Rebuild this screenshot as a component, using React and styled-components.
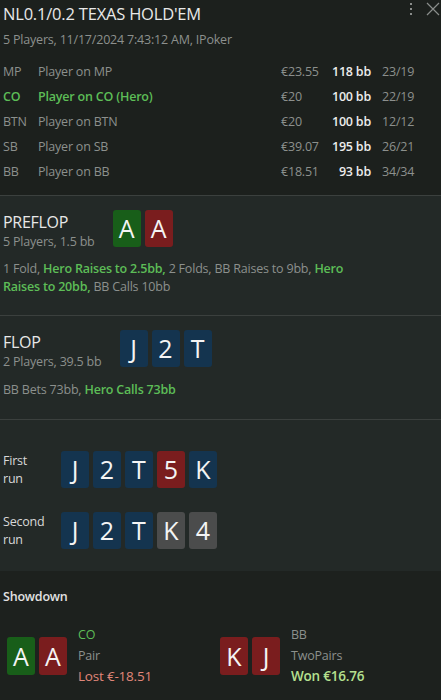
import React from 'react';
import styled, { createGlobalStyle } from 'styled-components';

const GlobalStyle = createGlobalStyle`
  html, body {
    margin: 0;
    padding: 0;
    background: #1c201d;
  }
  body {
    font-family: "Open Sans", "Noto Sans", sans-serif;
    color: #e6e6e6;
  }
`;

const Panel = styled.div`
  width: 441px;
  height: 700px;
  overflow: hidden;
  background: #1c201d;
  display: flex;
  flex-direction: column;
`;

const Header = styled.div`
  position: relative;
  padding: 3px 11px 11px 3px;
  border-bottom: 1px solid #3b403e;
`;

const Title = styled.div`
  font-size: 16.5px;
  line-height: 22px;
  color: #e8e8e8;
  letter-spacing: -0.2px;
`;

const Subtitle = styled.div`
  font-size: 12.5px;
  line-height: 20px;
  color: #8c908d;
  margin-top: 5px;
  margin-bottom: 9px;
  letter-spacing: -0.2px;
`;

const TopIcons = styled.div`
  position: absolute;
  top: 2px;
  right: 1px;
  display: flex;
  align-items: center;
  gap: 13px;
  color: #8a8d8b;
`;

const PlayerRow = styled.div`
  display: grid;
  grid-template-columns: 35px 1fr 50px 40px 59px;
  height: 25px;
  align-items: center;
  font-size: 12.5px;
  letter-spacing: -0.2px;
  color: ${p => (p.hero ? '#5dbd57' : '#8c908d')};
  font-weight: ${p => (p.hero ? 600 : 400)};
`;

const Muted = styled.span`
  font-weight: 400;
  color: #8c908d;
  padding-left: ${p => p.indent || 0};
`;

const Bb = styled.span`
  text-align: right;
  font-weight: 600;
  color: #ececec;
`;

const Street = styled.div`
  background: #232927;
  border-bottom: ${p => (p.last ? 'none' : '1px solid #3b403e')};
  padding: ${p => p.pad};
`;

const StreetHead = styled.div`
  display: flex;
  align-items: flex-end;
  gap: 18px;
`;

const StreetTitles = styled.div`
  margin-bottom: -5px;
`;

const StreetName = styled.div`
  font-size: 16px;
  line-height: 20px;
  color: #e8e8e8;
  letter-spacing: -0.3px;
`;

const StreetInfo = styled.div`
  font-size: 12.5px;
  line-height: 20px;
  color: #8c908d;
  letter-spacing: -0.2px;
`;

const Cards = styled.div`
  display: flex;
  gap: 4px;
`;

const CARD_COLORS = {
  green: '#185e19',
  red: '#7a1d1e',
  blue: '#14344f',
  gray: '#4b4c4c',
};

const Card = styled.div`
  width: 28px;
  height: ${p => (p.tall ? '38px' : '37px')};
  border-radius: 3px;
  background: ${p => CARD_COLORS[p.color]};
  color: #f4f4f4;
  font-size: 25px;
  line-height: ${p => (p.tall ? '38px' : '37px')};
  text-align: center;
`;

const Actions = styled.div`
  font-size: 12.5px;
  line-height: 18px;
  color: #8c908d;
  letter-spacing: -0.2px;
  margin-top: ${p => p.top};
  padding-right: 90px;
`;

const Hero = styled.span`
  color: #5dbd57;
  font-weight: 600;
`;

const RunRow = styled.div`
  display: flex;
  align-items: center;
  & + & {
    margin-top: 23px;
  }
`;

const RunLabel = styled.div`
  width: 58px;
  padding-top: 2px;
  font-size: 12.5px;
  line-height: 18px;
  color: #d8d8d8;
  letter-spacing: -0.2px;
`;

const Showdown = styled.div`
  flex: 1;
  background: #1d211e;
  padding: 16px 0 0 3px;
`;

const ShowdownTitle = styled.div`
  font-size: 12.5px;
  line-height: 20px;
  color: #e2e2e2;
  font-weight: 600;
  letter-spacing: -0.2px;
`;

const Hands = styled.div`
  display: grid;
  grid-template-columns: 213px 213px;
  padding-left: 4px;
  margin-top: 17px;
`;

const Hand = styled.div`
  display: flex;
  align-items: center;
  gap: 11px;
`;

const HandInfo = styled.div`
  display: flex;
  flex-direction: column;
  font-size: 12.5px;
  line-height: 21px;
  letter-spacing: -0.2px;
`;

const HandLine = styled.span`
  color: ${p => p.color || '#8c908d'};
  font-size: ${p => (p.big ? '13.5px' : '12.5px')};
  font-weight: ${p => (p.bold ? 600 : 400)};
`;

const players = [
  { pos: 'MP', name: 'Player on MP', money: '€23.55', bb: '118 bb', stat: '23/19' },
  { pos: 'CO', name: 'Player on CO (Hero)', money: '€20', bb: '100 bb', stat: '22/19', hero: true },
  { pos: 'BTN', name: 'Player on BTN', money: '€20', bb: '100 bb', stat: '12/12' },
  { pos: 'SB', name: 'Player on SB', money: '€39.07', bb: '195 bb', stat: '26/21' },
  { pos: 'BB', name: 'Player on BB', money: '€18.51', bb: '93 bb', stat: '34/34' },
];

const runs = [
  { label: ['First', 'run'], cards: [['J', 'blue'], ['2', 'blue'], ['T', 'blue'], ['5', 'red'], ['K', 'blue']] },
  { label: ['Second', 'run'], cards: [['J', 'blue'], ['2', 'blue'], ['T', 'blue'], ['K', 'gray'], ['4', 'gray']] },
];

const hands = [
  { cards: [['A', 'green'], ['A', 'red']], pos: 'CO', hero: true, made: 'Pair', result: 'Lost €-18.51', won: false },
  { cards: [['K', 'red'], ['J', 'red']], pos: 'BB', made: 'TwoPairs', result: 'Won €16.76', won: true },
];

const DotsIcon = () => (
  <svg width="4" height="14" viewBox="0 0 4 14">
    <rect x="1" y="1" width="2" height="2" fill="currentColor" />
    <rect x="1" y="6" width="2" height="2" fill="currentColor" />
    <rect x="1" y="11" width="2" height="2" fill="currentColor" />
  </svg>
);

const CloseIcon = () => (
  <svg width="14" height="14" viewBox="0 0 14 14">
    <path d="M1 1L13 13M13 1L1 13" stroke="currentColor" strokeWidth="1.2" />
  </svg>
);

export default function App() {
  return (
    <Panel>
      <GlobalStyle />
      <Header>
        <TopIcons>
          <DotsIcon />
          <CloseIcon />
        </TopIcons>
        <Title>NL0.1/0.2 TEXAS HOLD'EM</Title>
        <Subtitle>5 Players, 11/17/2024 7:43:12 AM, IPoker</Subtitle>
        {players.map(p => (
          <PlayerRow key={p.pos} hero={p.hero}>
            <span>{p.pos}</span>
            <span>{p.name}</span>
            <Muted>{p.money}</Muted>
            <Bb>{p.bb}</Bb>
            <Muted indent="11px">{p.stat}</Muted>
          </PlayerRow>
        ))}
      </Header>

      <Street pad="14px 3px 19px">
        <StreetHead>
          <StreetTitles>
            <StreetName>PREFLOP</StreetName>
            <StreetInfo>5 Players, 1.5 bb</StreetInfo>
          </StreetTitles>
          <Cards>
            <Card color="green">A</Card>
            <Card color="red">A</Card>
          </Cards>
        </StreetHead>
        <Actions top="13px">
          1 Fold, <Hero>Hero Raises to 2.5bb,</Hero> 2 Folds, BB Raises to 9bb,{' '}
          <Hero>Hero Raises to 20bb,</Hero> BB Calls 10bb
        </Actions>
      </Street>

      <Street pad="14px 3px 20px">
        <StreetHead>
          <StreetTitles>
            <StreetName>FLOP</StreetName>
            <StreetInfo>2 Players, 39.5 bb</StreetInfo>
          </StreetTitles>
          <Cards>
            <Card color="blue">J</Card>
            <Card color="blue">2</Card>
            <Card color="blue">T</Card>
          </Cards>
        </StreetHead>
        <Actions top="14px">
          BB Bets 73bb, <Hero>Hero Calls 73bb</Hero>
        </Actions>
      </Street>

      <Street pad="30px 3px 22px" last>
        {runs.map(r => (
          <RunRow key={r.label[0]}>
            <RunLabel>
              {r.label[0]}
              <br />
              {r.label[1]}
            </RunLabel>
            <Cards>
              {r.cards.map(([v, c], i) => (
                <Card key={i} color={c}>{v}</Card>
              ))}
            </Cards>
          </RunRow>
        ))}
      </Street>

      <Showdown>
        <ShowdownTitle>Showdown</ShowdownTitle>
        <Hands>
          {hands.map(h => (
            <Hand key={h.pos}>
              <Cards>
                {h.cards.map(([v, c], i) => (
                  <Card key={i} color={c} tall>{v}</Card>
                ))}
              </Cards>
              <HandInfo>
                <HandLine color={h.hero ? '#5dbd57' : undefined}>{h.pos}</HandLine>
                <HandLine>{h.made}</HandLine>
                <HandLine big bold={h.won} color={h.won ? '#b5e08f' : '#e0877a'}>
                  {h.result}
                </HandLine>
              </HandInfo>
            </Hand>
          ))}
        </Hands>
      </Showdown>
    </Panel>
  );
}
